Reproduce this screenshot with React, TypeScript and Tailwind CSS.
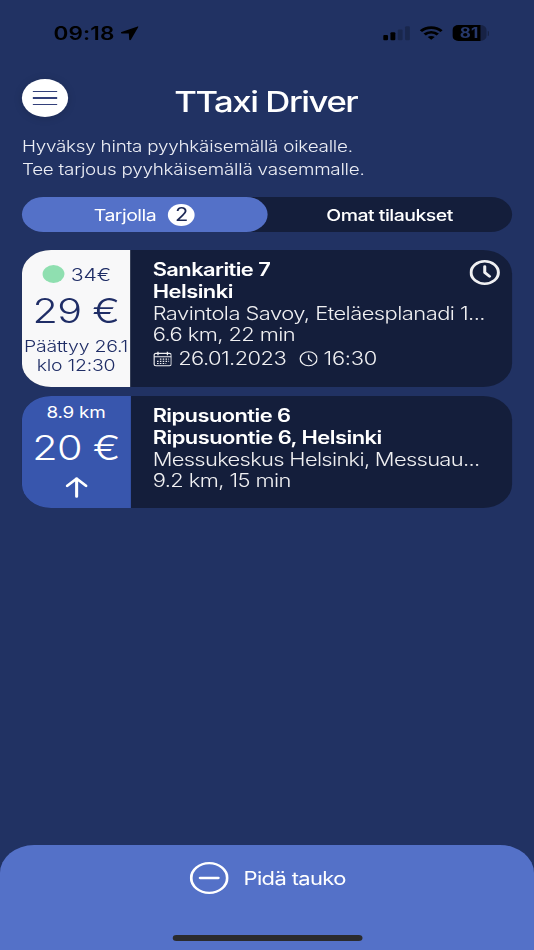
import type { ReactNode } from 'react';

function StatusBar() {
  return (
    <div className="flex h-[66px] items-center justify-between pr-[37px] pl-[44px] text-black">
      <div className="flex items-center gap-[5px]">
        <span className="text-[18.5px] leading-6 font-semibold tracking-[0.1px]">09:18</span>
        <svg viewBox="0 0 15 15" className="h-[15px] w-[15px]" fill="currentColor">
          <path d="M14.2 0.4 L0.9 6 C0.2 6.4 0.3 7.3 1.1 7.4 L6.9 7.6 L7.2 13.5 C7.3 14.4 8.2 14.5 8.6 13.8 L14.7 1 C14.9 0.5 14.6 0.2 14.2 0.4 Z" />
        </svg>
      </div>
      <div className="flex items-center">
        <svg viewBox="0 0 22 15" className="h-[15px] w-[22px]" fill="currentColor">
          <rect x="0" y="9" width="4" height="5.2" rx="1" />
          <rect x="6" y="6.2" width="4" height="8" rx="1" />
          <rect x="12" y="3.4" width="4" height="10.8" rx="1" opacity="0.22" />
          <rect x="18" y="0.3" width="4" height="13.9" rx="1" opacity="0.22" />
        </svg>
        <svg viewBox="0 0 19 14" className="ml-2 h-[14px] w-[19px]" fill="none" stroke="currentColor" strokeWidth="2.7">
          <path d="M1 5.1 C5.8 0.4 13.2 0.4 18 5.1" />
          <path d="M4.1 8.5 C7.2 5.5 11.8 5.5 14.9 8.5" />
          <path d="M9.5 13.8 L6.6 11 C8.3 9.6 10.7 9.6 12.4 11 Z" fill="currentColor" stroke="none" />
        </svg>
        <div className="ml-2 flex h-4 w-[28px] overflow-hidden rounded-[5px] bg-black/30">
          <div className="h-full w-[23px] bg-black pl-[6.5px] text-[14px] leading-4 font-bold text-[#26386c]">
            81
          </div>
        </div>
        <div className="ml-px h-[5px] w-[1.5px] rounded-r-full bg-black/30" />
      </div>
    </div>
  );
}

function ClockIcon({ className, strokeWidth }: { className: string; strokeWidth: number }) {
  return (
    <svg viewBox="0 0 24 24" className={className} fill="none" stroke="currentColor" strokeWidth={strokeWidth} strokeLinecap="round" strokeLinejoin="round">
      <circle cx="12" cy="12" r="10.8" />
      <path d="M12 6.2 V12 L15.8 15.8" />
    </svg>
  );
}

function CalendarIcon() {
  return (
    <svg viewBox="0 0 16 16" className="h-4 w-[15.5px] shrink-0" fill="none" stroke="currentColor" strokeWidth="1.1">
      <rect x="0.7" y="2.2" width="14.6" height="12.8" rx="1.6" />
      <path d="M0.7 5.6 H15.3 M4 0.6 V4 M12 0.6 V4" />
      <path d="M5.6 8.2 H13.4 M3.2 10.4 H13.4 M3.2 12.6 H11" strokeDasharray="1.3 1.1" strokeWidth="1.2" />
    </svg>
  );
}

type OrderCardProps = {
  side: ReactNode;
  title: string;
  place: string;
  destination: ReactNode;
  distance: string;
  className: string;
  children?: ReactNode;
};

function OrderCard({ side, title, place, destination, distance, className, children }: OrderCardProps) {
  return (
    <div className={`relative flex overflow-hidden rounded-[24px] bg-[#141e3b] ${className}`}>
      {side}
      <div className="min-w-0 flex-1 pt-[9.6px] pl-[18.5px] text-[18px] leading-[21.6px] font-light whitespace-nowrap text-[#f0f0f2]">
        <div className="font-semibold tracking-[-0.47px] text-white">{title}</div>
        <div className="font-semibold tracking-[-0.42px] text-white">{place}</div>
        {destination}
        <div className="tracking-[-0.47px]">{distance}</div>
        {children}
      </div>
    </div>
  );
}

export default function App() {
  return (
    <div className="h-[950px] w-[534px] overflow-hidden bg-[#213263]">
      <div className="flex h-[950px] w-[439px] origin-left scale-x-[1.2164] flex-col font-['Inter',sans-serif] text-white">
        <StatusBar />

        <header className="flex h-[65px] items-center px-[18px]">
          <button className="-mt-px flex h-[38px] w-[38px] flex-col items-center justify-center gap-[5.5px] rounded-full bg-white shadow-[0_1px_8px_rgba(0,0,0,0.15)]">
            <span className="h-[1.3px] w-[20px] bg-[#33407a]" />
            <span className="h-[1.3px] w-[20px] bg-[#33407a]" />
            <span className="h-[1.3px] w-[20px] bg-[#33407a]" />
          </button>
          <h1 className="flex-1 pt-[7px] pr-[40px] text-center text-[28.5px] leading-9 font-medium tracking-[-1.18px]">TTaxi Driver</h1>
        </header>

        <p className="mt-[3.5px] px-[18px] text-[15.5px] leading-[23.4px] font-light tracking-[-0.2px] whitespace-nowrap text-[#eceef5]">
          Hyväksy hinta pyyhkäisemällä oikealle.
          <br />
          Tee tarjous pyyhkäisemällä vasemmalle.
        </p>

        <div className="mx-[18px] mt-[15.5px] flex h-[35.5px] shrink-0 rounded-full bg-[#141e3b] text-[16px] tracking-[-0.42px]">
          <div className="flex w-1/2 items-center justify-center gap-[10px] rounded-full bg-[#5471c8]">
            <span>Tarjolla</span>
            <span className="flex h-[22px] w-[22px] items-center justify-center rounded-full bg-white text-[18px] tracking-normal text-[#1b2754]">2</span>
          </div>
          <div className="flex w-1/2 items-center justify-center font-medium">Omat tilaukset</div>
        </div>

        <main className="mt-[17.5px] flex flex-1 flex-col gap-[9px] px-[18px]">
          <OrderCard
            className="h-[137px]"
            title="Sankaritie 7"
            place="Helsinki"
            destination={<div className="tracking-[-0.44px]">Ravintola Savoy, Eteläesplanadi 1...</div>}
            distance="6.6 km, 22 min"
            side={
              <div className="flex w-[89px] shrink-0 flex-col items-center bg-[#f8f8f9] pt-[13px] font-light text-[#1f2d66]">
                <div className="flex h-6 items-center gap-[5px] pl-[1.5px] text-[17.5px] tracking-[-0.1px]">
                  <span className="-mt-px h-[18px] w-[18px] rounded-full bg-[#8fdfb0]" />
                  34€
                </div>
                <div className="mt-[4.5px] text-[34px] leading-10 tracking-[-0.6px] whitespace-nowrap">29 €</div>
                <div className="mt-[6px] text-center text-[16px] leading-[19px] tracking-[-0.2px] whitespace-nowrap">
                  Päättyy 26.1
                  <br />
                  klo 12:30
                </div>
              </div>
            }
          >
            <div className="mt-[2.4px] flex h-[22px] items-center tracking-[-0.46px]">
              <CalendarIcon />
              <span className="ml-[5.5px]">26.01.2023</span>
              <ClockIcon className="ml-[10.3px] h-[15.5px] w-[15.5px]" strokeWidth={1.8} />
              <span className="ml-[5px] tracking-[-0.2px]">16:30</span>
            </div>
            <ClockIcon className="absolute top-[10.5px] right-[10.3px] h-[25px] w-[25px]" strokeWidth={2.4} />
          </OrderCard>

          <OrderCard
            className="h-[112px]"
            title="Ripusuontie 6"
            place="Ripusuontie 6, Helsinki"
            destination={<div className="tracking-[-0.56px]">Messukeskus Helsinki, Messuau...</div>}
            distance="9.2 km, 15 min"
            side={
              <div className="flex w-[89px] shrink-0 flex-col items-center bg-[#3856ad] pt-[7px]">
                <div className="text-[15.5px] leading-5 tracking-[-0.2px]">8.9 km</div>
                <div className="mt-[5px] text-[34px] leading-10 font-light tracking-[-0.6px] whitespace-nowrap">20 €</div>
                <svg viewBox="0 0 18 21" className="mt-[9px] h-[21px] w-[18px]" fill="none" stroke="currentColor" strokeWidth="2.5" strokeLinecap="round" strokeLinejoin="round">
                  <path d="M9 19.6 V1.6 M1.2 8.8 L9 1.6 L16.8 8.8" />
                </svg>
              </div>
            }
          />
        </main>

        <footer className="flex h-[105px] shrink-0 flex-col items-center justify-between rounded-t-[28px] bg-[#5471c8] pt-[17px] pb-[9.5px]">
          <button className="flex items-center gap-[12.5px] pl-px text-[18px] tracking-[-0.5px]">
            <svg viewBox="0 0 32 32" className="h-8 w-8" fill="none" stroke="currentColor" strokeWidth="2.3" strokeLinecap="round">
              <circle cx="16" cy="16" r="14.8" />
              <path d="M8.5 16 H23.5" />
            </svg>
            Pidä tauko
          </button>
          <div className="h-[5.5px] w-[156px] rounded-full bg-[#2b2b2d]" />
        </footer>
      </div>
    </div>
  );
}
